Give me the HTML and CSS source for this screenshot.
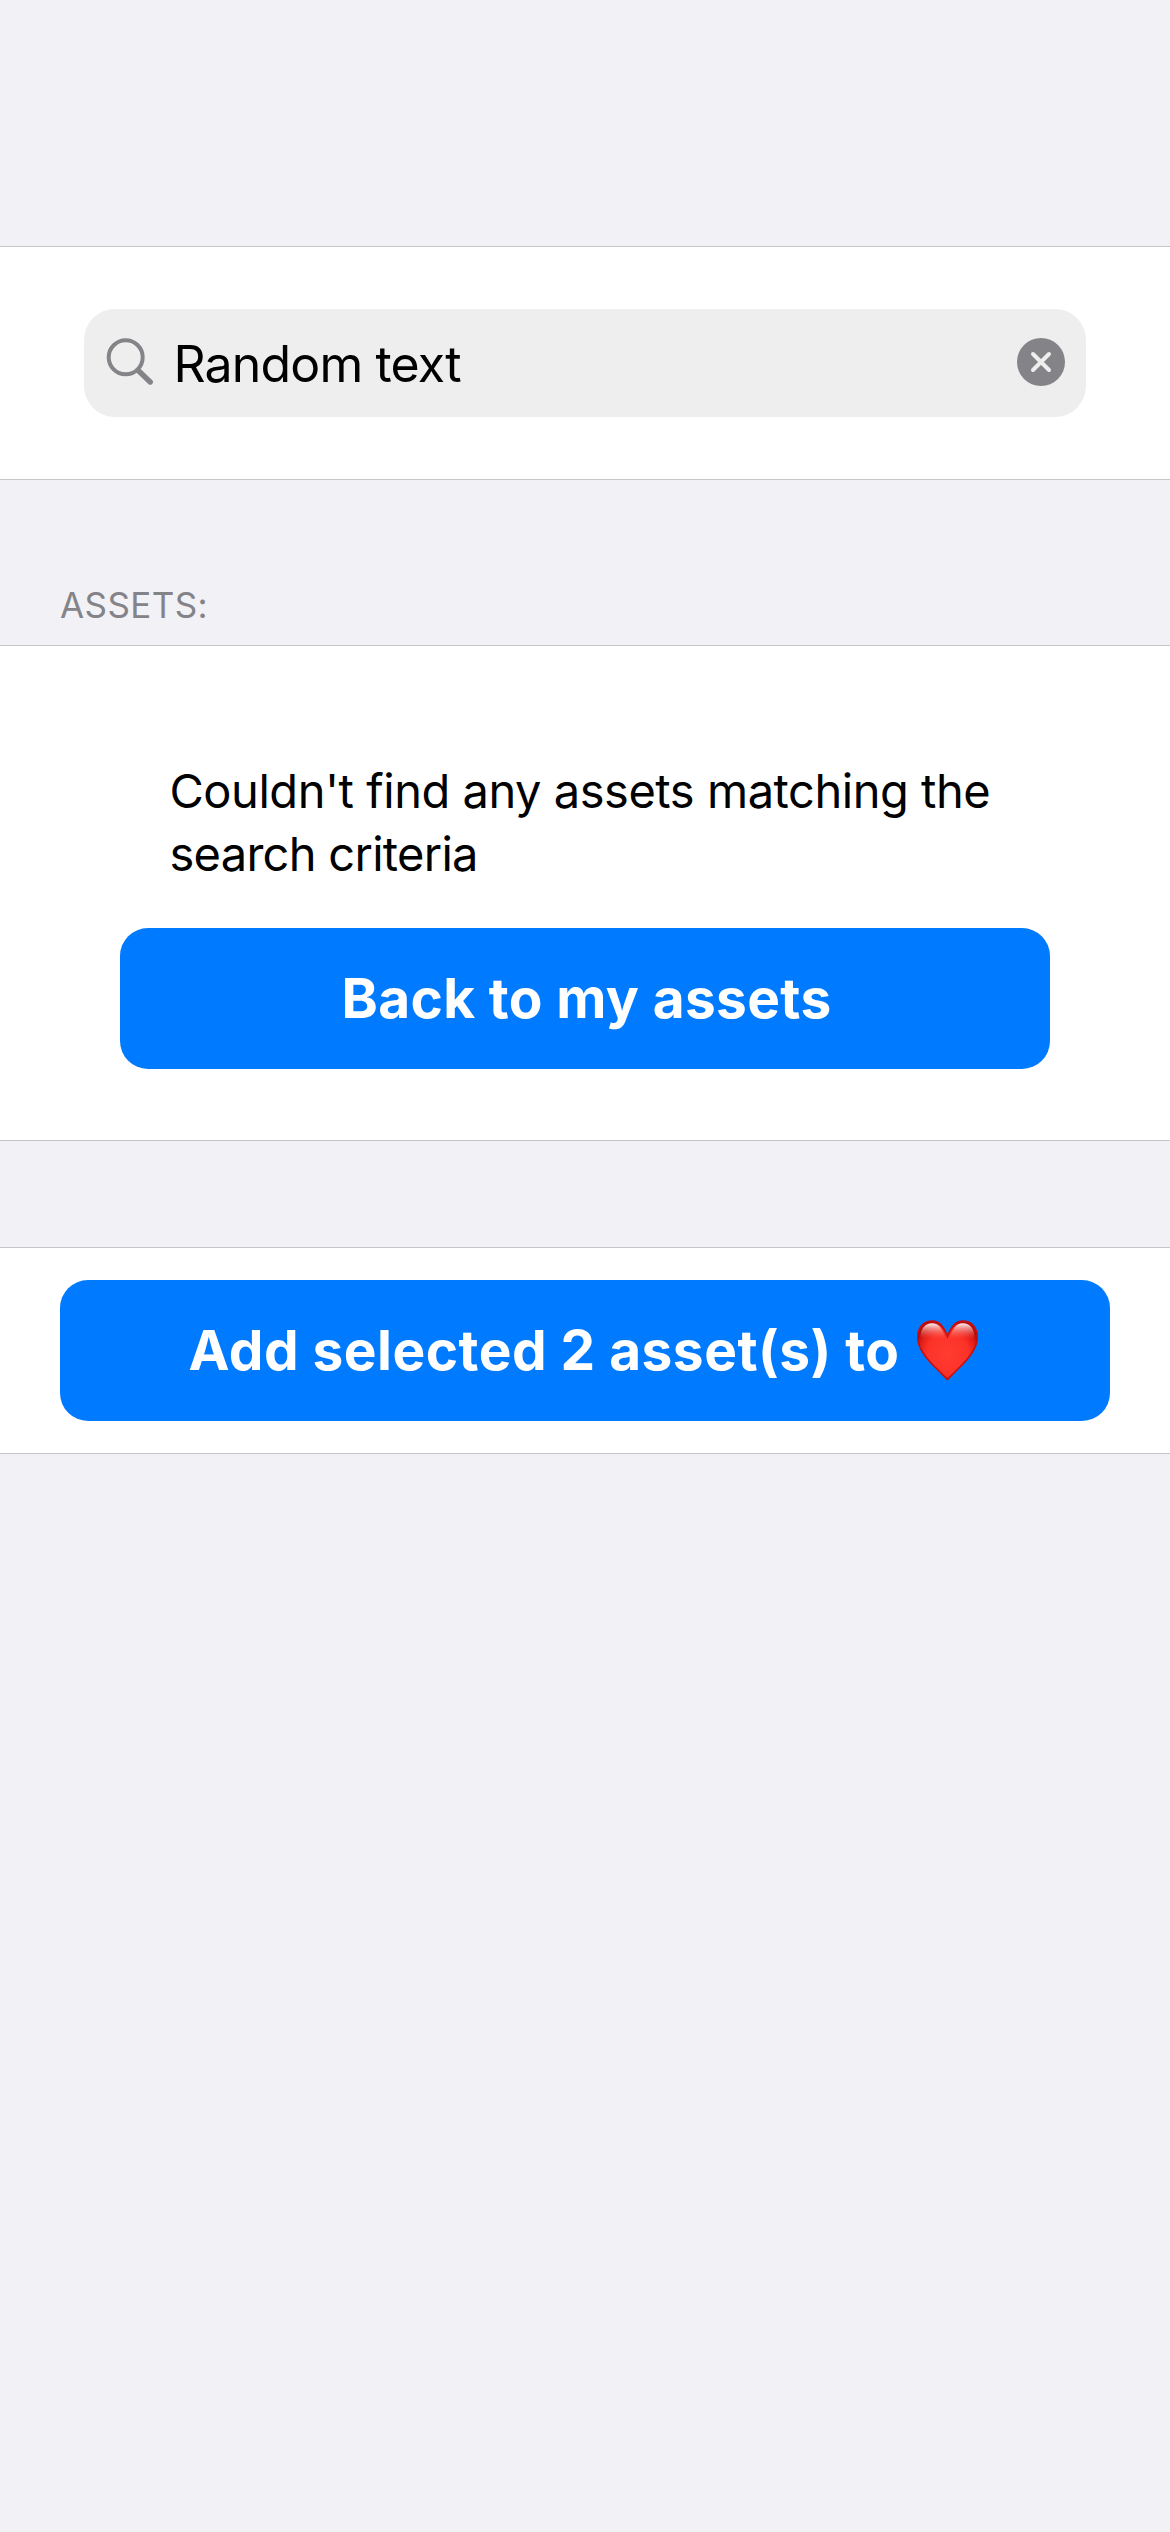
FILE: index.html
```html
<!DOCTYPE html>
<html lang="en">
<head>
<meta charset="utf-8">
<title>Assets</title>
<link rel="stylesheet" href="styles.css">
</head>
<body>
<main class="screen">
  <section class="group search-group">
    <div class="search">
      <svg class="search-icon" viewBox="0 0 48 48" fill="none" stroke="#848488" stroke-linecap="round"><circle cx="20.7" cy="20.3" r="17" stroke-width="4"/><path d="M33 33.2 45.2 45" stroke-width="5.4"/></svg>
      <span class="search-text">Random text</span>
      <svg class="clear-icon" viewBox="0 0 48 48"><circle cx="24" cy="24" r="24" fill="#848488"/><path d="M16 16 32 32M32 16 16 32" stroke="#eee" stroke-width="4" stroke-linecap="round"/></svg>
    </div>
  </section>
  <h2 class="heading">ASSETS:</h2>
  <section class="group assets-group">
    <p class="message"><span class="message-lead">Couldn't find any assets matching the</span><br>search criteria</p>
    <button class="button">Back to my assets</button>
  </section>
  <section class="group action-group">
    <button class="button"><span>Add selected 2 asset(s) to</span>
      <svg class="heart" viewBox="0 0 184 182" role="img" aria-label="heart">
        <defs>
          <radialGradient id="heart-fill" gradientUnits="userSpaceOnUse" cx="92" cy="100" r="100"><stop offset="0" stop-color="#ff3c30"/><stop offset=".62" stop-color="#fc3228"/><stop offset=".85" stop-color="#e31d18"/><stop offset="1" stop-color="#b80c0c"/></radialGradient>
          <linearGradient id="heart-shine" x2="0" y2="1"><stop offset="0" stop-color="#fff" stop-opacity=".95"/><stop offset="1" stop-color="#ff6a60" stop-opacity="0"/></linearGradient>
          <clipPath id="heart-clip"><path d="M92 182C60 146 0 103 0 50C0 20 20 0 46 0C68 0 82 17 92 43C102 17 116 0 138 0C164 0 184 20 184 50C184 103 124 146 92 182Z"/></clipPath>
        </defs>
        <g clip-path="url(#heart-clip)">
          <path fill="url(#heart-fill)" stroke="#c40f10" stroke-width="9" d="M92 182C60 146 0 103 0 50C0 20 20 0 46 0C68 0 82 17 92 43C102 17 116 0 138 0C164 0 184 20 184 50C184 103 124 146 92 182Z"/>
          <path fill="url(#heart-shine)" d="M10 56C10 26 24 9 46 9C66 9 78 26 86 56ZM98 56C106 26 118 9 138 9C160 9 174 26 174 56Z"/>
        </g>
      </svg>
    </button>
  </section>
</main>
</body>
</html>
```
FILE: styles.css
```css
* { box-sizing: border-box; }
body { margin: 0; background: #f2f1f6; color: #000; font-family: Inter, "Liberation Sans", sans-serif; }
.screen { min-height: 2532px; padding-top: 246px; }
.group { background: #fff; border-top: 1px solid #c6c6c8; border-bottom: 1px solid #c6c6c8; }
.search-group { height: 234px; padding: 62px 84px; }
.search { display: flex; align-items: center; height: 108px; padding: 0 21px; border-radius: 31px; background: #eee; }
.search-icon { width: 48px; height: 48px; margin-bottom: 4px; }
.search-text { flex: 1; margin-left: 20.5px; padding-top: 2px; font-size: 50px; letter-spacing: -.85px; line-height: 60px; }
.clear-icon { width: 48px; height: 48px; margin-bottom: 2px; }
.heading { height: 165px; margin: 0; padding: 104px 60px 0; color: #848488; font-size: 35px; font-weight: 400; letter-spacing: .4px; line-height: 42px; }
.assets-group { height: 496px; padding: 113px 120px 0; }
.message { margin: 0 49.5px; font-size: 47px; letter-spacing: -.72px; line-height: 63px; white-space: nowrap; }
.message-lead { letter-spacing: -.46px; }
.button { display: flex; align-items: center; justify-content: center; width: 100%; height: 141px; padding: 0 0 1px; border: 0; border-radius: 28px; background: #007aff; color: #fff; font: 700 55px/66px Inter, "Liberation Sans", sans-serif; letter-spacing: .35px; }
.assets-group .button { margin-top: 43px; padding-left: 3px; }
.action-group { height: 207px; margin-top: 106px; padding: 32px 60px; }
.action-group .button { letter-spacing: .48px; }
.heart { width: 61px; height: 61px; margin: 0 4px 0 17px; }
```
